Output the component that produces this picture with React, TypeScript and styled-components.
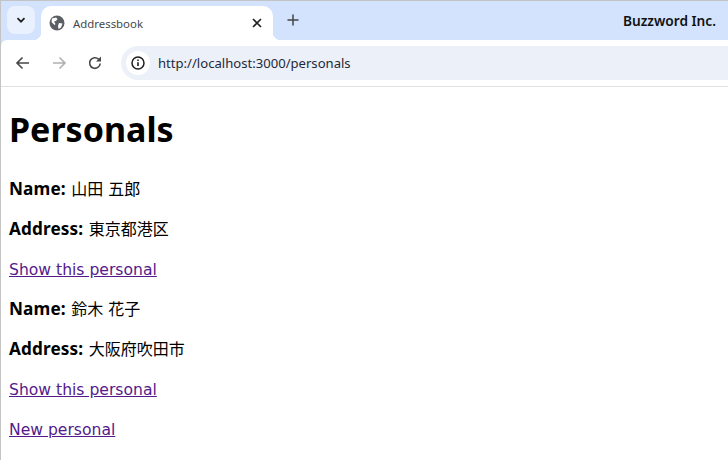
import React from "react";
import styled, { createGlobalStyle } from "styled-components";

const Global = createGlobalStyle`
  html, body { margin: 0; padding: 0; background: #fff; }
  body { font-family: "Noto Sans", "Noto Sans CJK JP", sans-serif; overflow: hidden; }
`;
const Windowed = styled.div`
  width: 728px; height: 460px; display: flex; flex-direction: column; overflow: hidden;
  border-left: 1px solid #c4c4c4; border-top: 1px solid #c4c4c4; box-sizing: border-box; background: #d3e3fd;
`;
const TabStrip = styled.div`
  height: 39px; flex: none; background: #d3e3fd; display: flex; align-items: flex-start; position: relative;
`;
const TabSearch = styled.div`
  width: 28px; height: 28px; margin: 5px 0 0 6px; border-radius: 8px; background: #e9f0fe;
  display: flex; align-items: center; justify-content: center; flex: none;
`;
const Tab = styled.div`
  width: 232px; height: 34px; margin: 5px 0 0 6px; background: #fff; border-radius: 10px 10px 0 0;
  display: flex; align-items: center; padding: 0 10px 0 8px; box-sizing: border-box; flex: none; position: relative;
  &::before, &::after { content: ""; position: absolute; bottom: 0; width: 8px; height: 8px; }
  &::before { left: -8px; background: radial-gradient(circle at 0 0, transparent 8px, #fff 8.5px); }
  &::after { right: -8px; background: radial-gradient(circle at 100% 0, transparent 8px, #fff 8.5px); }
`;
const TabTitle = styled.span`
  font-size: 11.4px; color: #45474a; margin-left: 8px; flex: 1; font-family: "Noto Sans", sans-serif;
`;
const NewTab = styled.div`
  width: 28px; height: 28px; margin: 5px 0 0 6px; display: flex; align-items: center; justify-content: center; flex: none;
`;
const Profile = styled.div`
  margin-left: auto; padding-right: 12px; height: 39px; display: flex; align-items: center;
  font-size: 13.7px; font-weight: 600; color: #111;
`;
const Toolbar = styled.div`
  height: 46px; flex: none; background: #fff; border-bottom: 1px solid #e0e0e0; box-sizing: content-box;
  display: flex; align-items: center; padding-left: 4px; border-radius: 6px 0 0 0;
`;
const NavButton = styled.div`
  width: 36px; height: 34px; display: flex; align-items: center; justify-content: center; flex: none;
`;
const UrlBar = styled.div`
  flex: 1; height: 34px; margin-left: 8px; border-radius: 17px 0 0 17px; background: #ecf0f8;
  display: flex; align-items: center; padding-left: 5px;
`;
const InfoChip = styled.div`
  width: 24px; height: 24px; border-radius: 50%; background: #fff; display: flex; align-items: center; justify-content: center; flex: none;
`;
const UrlText = styled.span`
  font-size: 13.1px; color: #1f2a3a; margin-left: 8px;
`;
const Page = styled.main`
  padding: 8px 8px 0; flex: 1; background: #fff; font-family: "DejaVu Sans", "Noto Sans CJK JP", sans-serif;
`;
const Heading = styled.h1`
  font-family: "Noto Sans", sans-serif; font-size: 34px; line-height: 54px; margin: 7px 0 22px; font-weight: 700; color: #000;
`;
const Para = styled.p`
  font-size: 15.6px; line-height: 24px; margin: 0 0 16px; color: #000;
`;
const Label = styled.strong`
  font-family: "Noto Sans", sans-serif; font-weight: 700; font-size: 17.2px; line-height: 0; letter-spacing: 0.12px;
`;
const Cjk = styled.span`
  font-family: "Noto Sans CJK JP", sans-serif; font-size: 16px; line-height: 0; word-spacing: 1.5px; margin-left: 0.5px;
`;
const Visited = styled.a`
  color: #551a8b; text-decoration: underline;
`;

const Globe = () => (
  <svg width="16" height="16" viewBox="0 0 16 16">
    <circle cx="8" cy="8" r="7.5" fill="#5b5e63" />
    <path d="M3 3.5 L7 2.5 L8.5 4 L7 6 L5 6.5 L6.5 9 L5.5 10 L2.5 7 Z" fill="#fff" />
    <path d="M10 8 L13.5 8.5 L12 12.5 L9.5 14 L9 11 Z" fill="#fff" />
  </svg>
);

const Records = [
  { name: "山田 五郎", address: "東京都港区" },
  { name: "鈴木 花子", address: "大阪府吹田市" },
];

export default function App() {
  return (
    <Windowed>
      <Global />
      <TabStrip>
        <TabSearch>
          <svg width="12" height="12" viewBox="0 0 12 12"><path d="M2.5 4.2 L6 7.7 L9.5 4.2" fill="none" stroke="#1f1f1f" strokeWidth="1.7" /></svg>
        </TabSearch>
        <Tab>
          <Globe />
          <TabTitle>Addressbook</TabTitle>
          <svg width="12" height="12" viewBox="0 0 12 12"><path d="M2 2 L10 10 M10 2 L2 10" stroke="#222" strokeWidth="1.6" /></svg>
        </Tab>
        <NewTab>
          <svg width="14" height="14" viewBox="0 0 14 14"><path d="M7 1.5 V12.5 M1.5 7 H12.5" stroke="#444" strokeWidth="1.5" /></svg>
        </NewTab>
        <Profile>Buzzword Inc.</Profile>
      </TabStrip>
      <Toolbar>
        <NavButton>
          <svg width="16" height="16" viewBox="0 0 16 16"><path d="M14 8 H2.5 M7.5 2.5 L2 8 L7.5 13.5" fill="none" stroke="#474747" strokeWidth="1.6" /></svg>
        </NavButton>
        <NavButton>
          <svg width="16" height="16" viewBox="0 0 16 16"><path d="M2 8 H13.5 M8.5 2.5 L14 8 L8.5 13.5" fill="none" stroke="#b0b0b0" strokeWidth="1.6" /></svg>
        </NavButton>
        <NavButton>
          <svg width="16" height="16" viewBox="0 0 16 16"><path d="M13.2 8.5 A5.3 5.3 0 1 1 11.6 4.2" fill="none" stroke="#474747" strokeWidth="1.6" /><path d="M14 1.5 V6.5 H9 Z" fill="#474747" /></svg>
        </NavButton>
        <UrlBar>
          <InfoChip>
            <svg width="16" height="16" viewBox="0 0 16 16"><circle cx="8" cy="8" r="6" fill="none" stroke="#1f1f1f" strokeWidth="1.5" /><path d="M8 7.2 V11 M8 4.6 V6" stroke="#1f1f1f" strokeWidth="1.6" /></svg>
          </InfoChip>
          <UrlText>http://localhost:3000/personals</UrlText>
        </UrlBar>
      </Toolbar>
      <Page>
        <Heading>Personals</Heading>
        {Records.map((r) => (
          <React.Fragment key={r.name}>
            <Para><Label>Name:</Label> <Cjk>{r.name}</Cjk></Para>
            <Para><Label>Address:</Label> <Cjk>{r.address}</Cjk></Para>
            <Para><Visited href="#">Show this personal</Visited></Para>
          </React.Fragment>
        ))}
        <Para><Visited href="#">New personal</Visited></Para>
      </Page>
    </Windowed>
  );
}
